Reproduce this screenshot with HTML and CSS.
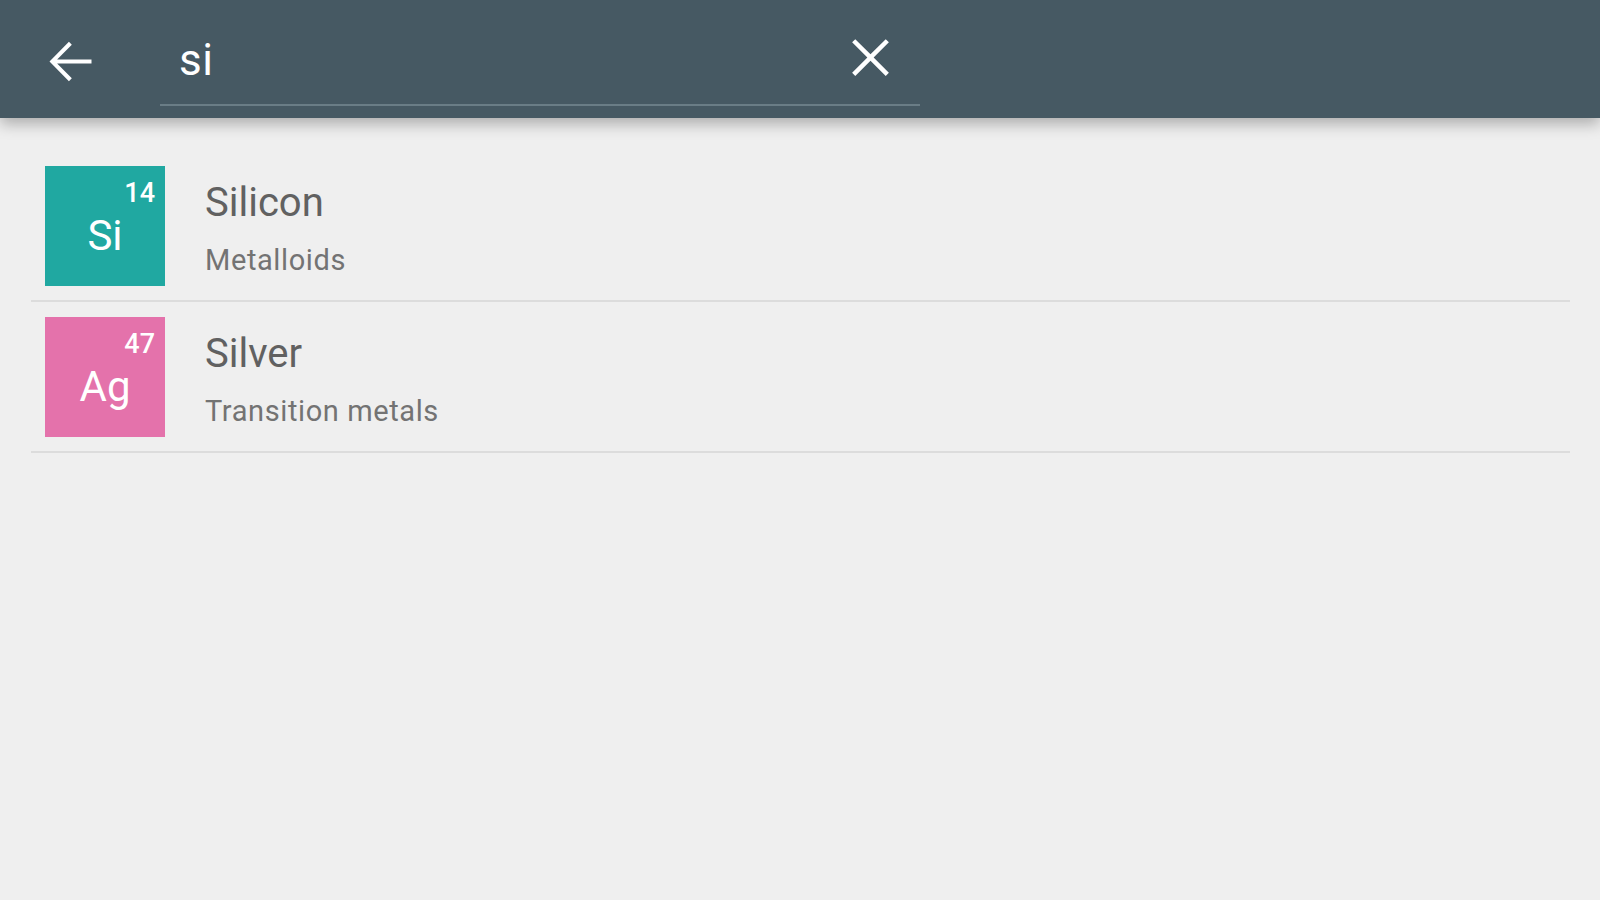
FILE: index.html
```html
<!DOCTYPE html>
<html lang="en">
<head>
<meta charset="utf-8">
<title>Search elements</title>
<link rel="stylesheet" href="styles.css">
</head>
<body>
<header class="appbar">
  <button class="icon-btn back" aria-label="Back">
    <svg viewBox="0 0 24 24" width="63" height="63"><path fill="#fff" d="M20 11.2H6.9l5.6-5.6L11.4 4.5 4 12l7.4 7.5 1.1-1.1-5.6-5.6H20z"/></svg>
  </button>
  <div class="search-field">
    <span class="query">si</span>
    <button class="icon-btn clear" aria-label="Clear">
      <svg viewBox="0 0 24 24" width="63" height="63"><path fill="#fff" d="M19 6.2L17.8 5 12 10.8 6.2 5 5 6.2 10.8 12 5 17.8 6.2 19 12 13.2 17.8 19 19 17.8 13.2 12z"/></svg>
    </button>
  </div>
</header>
<main class="results">
  <div class="row">
    <div class="tile metalloid">
      <span class="num">14</span>
      <span class="sym">Si</span>
    </div>
    <div class="info">
      <div class="name">Silicon</div>
      <div class="group">Metalloids</div>
    </div>
  </div>
  <div class="row">
    <div class="tile transition">
      <span class="num">47</span>
      <span class="sym">Ag</span>
    </div>
    <div class="info">
      <div class="name">Silver</div>
      <div class="group">Transition metals</div>
    </div>
  </div>
</main>
</body>
</html>
```
FILE: styles.css
```css
* { box-sizing: border-box; }
html, body { margin: 0; padding: 0; }
body {
  background: #efefef;
  font-family: Roboto, "Noto Sans", "Liberation Sans", sans-serif;
  width: 1600px;
  height: 900px;
  overflow: hidden;
}
.appbar {
  position: relative;
  z-index: 2;
  height: 118px;
  background: #465963;
  display: flex;
  align-items: flex-start;
  padding-left: 39px;
  box-shadow: 0 6px 14px rgba(0, 0, 0, 0.28);
}
.icon-btn {
  border: 0;
  padding: 0;
  margin: 0;
  background: none;
  width: 63px;
  height: 63px;
  display: block;
}
.icon-btn svg { display: block; }
.back { margin-top: 30px; }
.search-field {
  margin-left: 58px;
  width: 760px;
  height: 106px;
  border-bottom: 2px solid #6a7d86;
  display: flex;
  align-items: flex-start;
  padding-left: 19px;
  padding-right: 18px;
}
.query {
  color: #ffffff;
  font-size: 44px;
  line-height: 50px;
  margin-top: 35px;
  letter-spacing: 0.5px;
}
.clear {
  margin-left: auto;
  margin-top: 26px;
}
.results {
  padding: 33px 30px 0 31px;
}
.row {
  display: flex;
  align-items: flex-start;
  padding: 15px 0 14px 14px;
  border-bottom: 2px solid #dcdcdc;
}
.tile {
  position: relative;
  width: 120px;
  height: 120px;
  flex: none;
  display: flex;
  justify-content: center;
  padding-top: 49px;
  color: #fff;
}
.metalloid { background: #20a8a1; }
.transition { background: #e472ab; }
.num {
  position: absolute;
  top: 14px;
  right: 10px;
  font-size: 27px;
  line-height: 27px;
  font-weight: 500;
}
.sym {
  font-size: 42px;
  line-height: 42px;
}
.info {
  margin-left: 40px;
}
.name {
  color: #616161;
  font-size: 40px;
  line-height: 47px;
  margin-top: 13px;
}
.group {
  color: #737373;
  font-size: 29px;
  line-height: 34px;
  margin-top: 17px;
  letter-spacing: 0.6px;
}
```
